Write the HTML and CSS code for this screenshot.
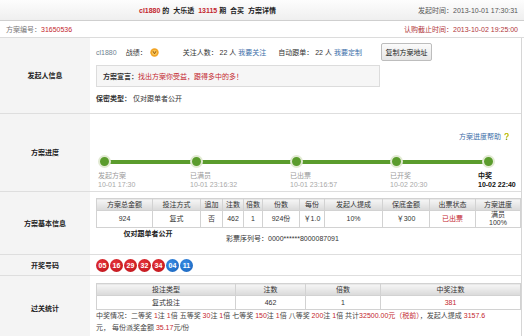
FILE: index.html
```html
<!DOCTYPE html>
<html lang="zh-CN">
<head>
<meta charset="utf-8">
<title>方案详情</title>
<link rel="stylesheet" href="styles.css">
</head>
<body>

<div class="topbar">
  <div class="title"><span class="red">cl1880</span> 的 &nbsp;大乐透 &nbsp;<span class="red">13115</span> 期 &nbsp;合买 &nbsp;方案详情</div>
  <div class="pubtime">发起时间：2013-10-01 17:30:31</div>
</div>
<div class="subbar">
  <span class="gray">方案编号：<span class="red">31650536</span></span>
  <span class="deadline">认购截止时间：2013-10-02 19:25:00</span>
</div>

<div class="detail">

  <div class="row r-owner">
    <div class="label">发起人信息</div>
    <div class="cell">
      <div class="owner-line">
        <span class="user">cl1880</span>
        <span class="record">战绩：</span>
        <svg class="medal" width="9" height="9" viewBox="0 0 9 9">
          <circle cx="4.5" cy="4.5" r="4.2" fill="#f2a425"/>
          <circle cx="4.5" cy="4.5" r="2.6" fill="#f7c75a"/>
          <path d="M3 3.2 L4.5 5.8 L6 3.2" stroke="#9a5a10" stroke-width="1" fill="none"/>
        </svg>
        <span class="follow">关注人数： 22 人 <a class="link">我要关注</a></span>
        <span class="follow auto">自动跟单： 22 人 <a class="link">我要定制</a></span>
        <button class="copy">复制方案地址</button>
      </div>
      <div class="slogan"><b>方案宣言：</b><span class="red">找出方案你受益，跟得多中的多！</span></div>
      <div class="secret"><b>保密类型：</b> 仅对跟单者公开</div>
    </div>
  </div>

  <div class="row r-progress">
    <div class="label">方案进度</div>
    <div class="cell">
      <div class="help"><a class="link">方案进度帮助</a>
        <svg width="5" height="7" viewBox="0 0 5 7">
          <path d="M0.9 2.1 A1.6 1.6 0 1 1 3.1 3.5 C2.6 3.8 2.5 4.1 2.5 4.8" stroke="#c4c21c" stroke-width="1.3" fill="none"/>
          <circle cx="2.5" cy="6.2" r="0.8" fill="#7d9a14"/>
        </svg>
      </div>
      <div class="steps">
        <div class="step w92">
          <div class="node"><i class="dot"></i><i class="seg"></i></div>
          <div class="step-name">发起方案</div>
          <div class="step-time">10-01 17:30</div>
        </div>
        <div class="step w100">
          <div class="node"><i class="dot"></i><i class="seg"></i></div>
          <div class="step-name">已满员</div>
          <div class="step-time">10-01 23:16:32</div>
        </div>
        <div class="step w100">
          <div class="node"><i class="dot"></i><i class="seg"></i></div>
          <div class="step-name">已出票</div>
          <div class="step-time">10-01 23:16:57</div>
        </div>
        <div class="step w92">
          <div class="node"><i class="dot"></i><i class="seg"></i></div>
          <div class="step-name">已开奖</div>
          <div class="step-time">10-02 20:30</div>
        </div>
        <div class="step last">
          <div class="node"><i class="dot"></i></div>
          <div class="step-name">中奖</div>
          <div class="step-time">10-02 22:40</div>
        </div>
      </div>
    </div>
  </div>

  <div class="row r-basic">
    <div class="label">方案基本信息</div>
    <div class="cell">
      <table class="grid basic">
        <colgroup>
          <col style="width:56px"><col style="width:48px"><col style="width:22px"><col style="width:21px">
          <col style="width:19px"><col style="width:37px"><col style="width:25px"><col style="width:58px">
          <col style="width:47px"><col style="width:46px"><col style="width:45px">
        </colgroup>
        <tr>
          <th>方案总金额</th><th>投注方式</th><th>追加</th><th>注数</th><th>倍数</th><th>份数</th>
          <th>每份</th><th>发起人提成</th><th>保底金额</th><th>出票状态</th><th>方案进度</th>
        </tr>
        <tr>
          <td>924</td><td>复式</td><td>否</td><td>462</td><td>1</td><td>924份</td>
          <td>￥1.0</td><td>10%</td><td>￥300</td><td class="red">已出票</td><td>满员<br>100%</td>
        </tr>
      </table>
      <div class="meta">
        <div class="open-tip">仅对跟单者公开</div>
        <div class="serial">彩票序列号：0000******8000087091</div>
      </div>
    </div>
  </div>

  <div class="row r-balls">
    <div class="label">开奖号码</div>
    <div class="cell balls">
      <span class="ball">05</span><span class="ball">16</span><span class="ball">29</span><span class="ball">32</span><span class="ball">34</span><span class="ball blue">04</span><span class="ball blue">11</span>
    </div>
  </div>

  <div class="row r-stats">
    <div class="label">过关统计</div>
    <div class="cell">
      <table class="grid stats">
        <colgroup>
          <col style="width:139px"><col style="width:70px"><col style="width:75px"><col style="width:140px">
        </colgroup>
        <tr><th>投注类型</th><th>注数</th><th>倍数</th><th>中奖注数</th></tr>
        <tr><td>复式投注</td><td>462</td><td>1</td><td class="red">381</td></tr>
      </table>
      <p class="prize">中奖情况：二等奖 <span class="red">1</span>注 <span class="red">1</span>倍 五等奖 <span class="red">30</span>注 <span class="red">1</span>倍 七等奖 <span class="red">150</span>注 <span class="red">1</span>倍 八等奖 <span class="red">200</span>注 <span class="red">1</span>倍 共计<span class="red">32500.00元（税前）</span>，发起人提成 <span class="red">3157.6</span><br>元， 每份派奖金额 <span class="red">35.17</span>元/份</p>
    </div>
  </div>

</div>

</body>
</html>
```

FILE: styles.css
```css
body {
  margin: 0;
  font-family: "Liberation Sans", "Noto Sans CJK SC", sans-serif;
  font-size: 7px;
  line-height: 9px;
  color: #333;
  background: #fff;
}

.red { color: #c3262e; }
.gray { color: #777; }

.link {
  color: #3b6ea8;
  text-decoration: none;
}

/* top bars */
.topbar {
  display: flex;
  align-items: center;
  height: 20px;
  padding-right: 6px;
  border-bottom: 1px solid #cfcfcf;
  background: linear-gradient(#fdfdfd, #efefef);
}
.title {
  margin-left: 139px;
  font-weight: bold;
  color: #222;
}
.pubtime {
  margin-left: auto;
  color: #555;
}

.subbar {
  display: flex;
  align-items: center;
  justify-content: space-between;
  height: 16px;
  padding: 0 6px;
  border-bottom: 1px solid #dcdcdc;
}
.deadline { color: #b0353a; }

/* detail rows */
.detail {
  width: 521px;
  border-right: 1px solid #d6d6d6;
}
.row {
  display: grid;
  grid-template-columns: 90px 1fr;
  border-bottom: 1px solid #dedede;
}
.label {
  display: flex;
  align-items: center;
  justify-content: center;
  background: #f4f4f4;
  font-weight: bold;
  color: #222;
}
.cell {
  padding-left: 6px;
}

.r-owner { height: 75px; }
.r-progress { height: 77px; }
.r-basic { height: 62px; }
.r-balls { height: 20px; }
.r-stats { height: 64px; }

/* owner */
.owner-line {
  display: flex;
  align-items: center;
  margin-top: 5px;
  height: 18px;
}
.user { color: #6f7f90; }
.record { margin-left: 9px; }
.medal { margin-left: 3px; }
.follow { margin-left: 24px; }
.follow.auto { margin-left: 12px; }
.copy {
  margin-left: 19px;
  width: 51px;
  height: 18px;
  padding: 0;
  font: inherit;
  color: #222;
  border: 1px solid #bdbdbd;
  border-radius: 2px;
  background: linear-gradient(#fbfbfb, #e6e6e6);
}
.slogan {
  display: flex;
  align-items: center;
  width: 276px;
  height: 20px;
  margin-top: 4px;
  padding-left: 6px;
  border: 1px solid #dcdcdc;
  background: #f6f6f6;
}
.secret {
  margin-top: 7px;
}

/* progress */
.help {
  display: flex;
  align-items: center;
  justify-content: flex-end;
  gap: 3px;
  margin-top: 18px;
  padding-right: 12px;
}
.steps {
  display: flex;
  margin-top: 14px;
  margin-left: 2px;
}
.w92 { width: 92px; }
.w100 { width: 100px; }
.step.last { flex: 1; }
.node {
  display: flex;
  align-items: center;
  height: 13px;
}
.dot {
  position: relative;
  z-index: 1;
  width: 9px;
  height: 9px;
  border: 2px solid #e2ead3;
  border-radius: 50%;
  background: #5b9c2d;
}
.seg {
  flex: 1;
  height: 4px;
  margin: 0 -2px;
  background: #5b9c2d;
}
.step-name {
  margin-top: 3px;
  color: #9a9a9a;
}
.step-time {
  color: #a8a8a8;
}
.last .step-name,
.last .step-time {
  margin-left: -4px;
  color: #111;
  font-weight: bold;
}

/* tables */
.grid {
  border-collapse: collapse;
  table-layout: fixed;
  width: 424px;
}
.grid th,
.grid td {
  padding: 0;
  border: 1px solid #d2d2d2;
  text-align: center;
  font-weight: normal;
}
.grid th {
  height: 11px;
  background: linear-gradient(#f6f6f6, #d9d9d9);
  color: #333;
}
.basic { margin-top: 6px; }
.basic td { height: 16px; line-height: 8px; }
.stats { margin-top: 7px; }
.stats td { height: 13px; }

.meta {
  display: flex;
  align-items: flex-start;
  margin-top: 1px;
}
.open-tip {
  width: 104px;
  text-align: center;
  font-weight: bold;
  color: #222;
}
.serial {
  margin-top: 5px;
  margin-left: 26px;
}

/* balls */
.balls {
  display: flex;
  align-items: center;
  gap: 1px;
}
.ball {
  width: 13px;
  height: 13px;
  border-radius: 50%;
  background: radial-gradient(circle at 40% 35%, #e8353a, #b80f16);
  color: #fff;
  font-weight: bold;
  line-height: 13px;
  text-align: center;
}
.ball.blue {
  background: radial-gradient(circle at 40% 35%, #3a8de6, #1560b8);
}

.prize {
  margin: 0;
  line-height: 12px;
  white-space: nowrap;
  color: #444;
}
```
